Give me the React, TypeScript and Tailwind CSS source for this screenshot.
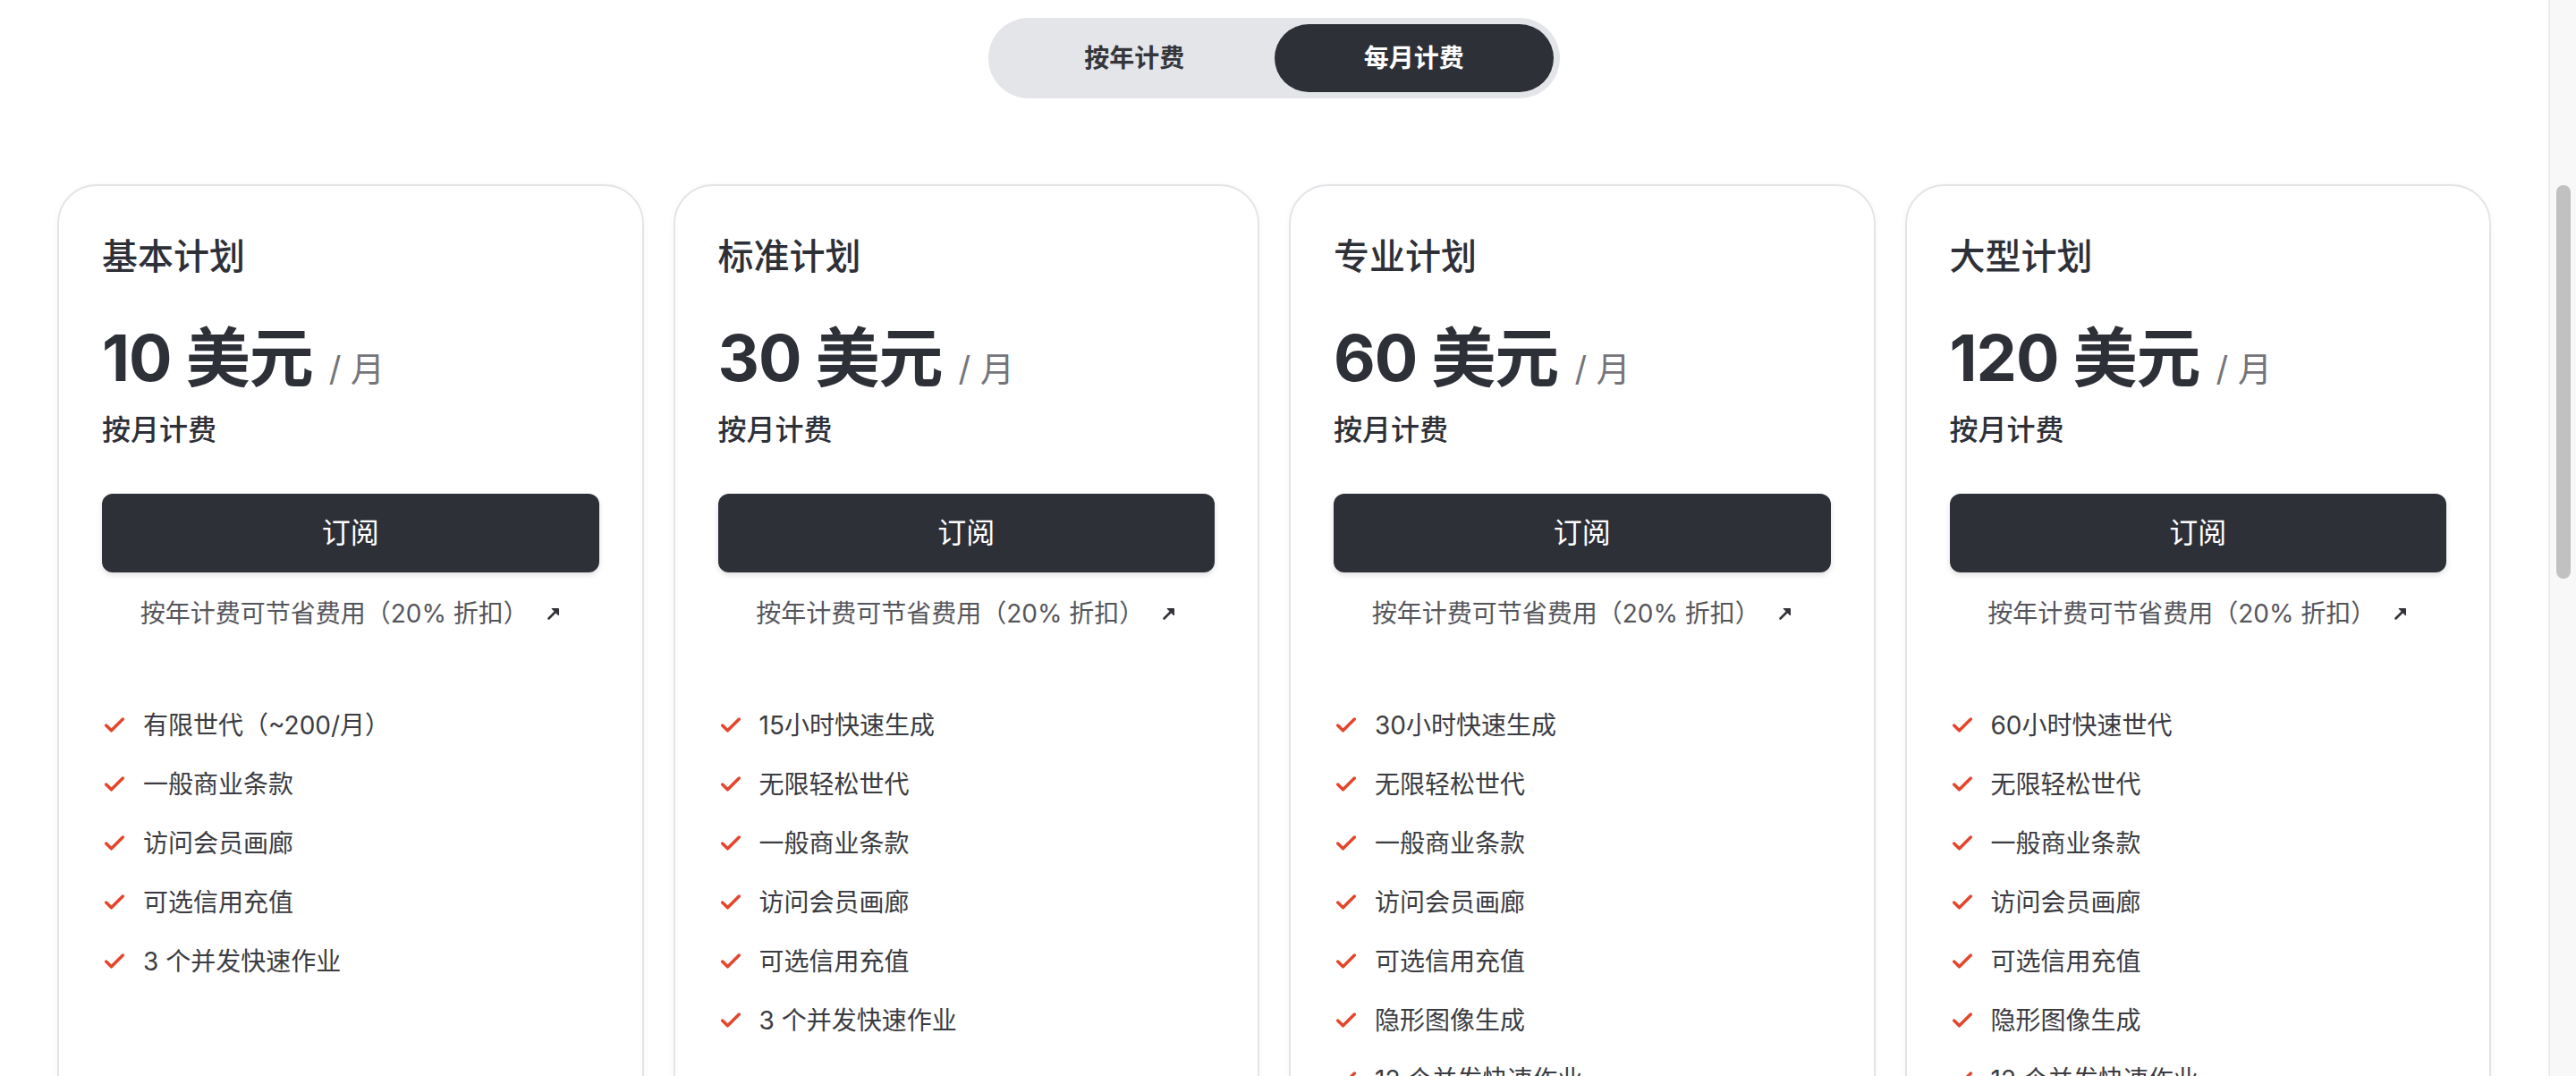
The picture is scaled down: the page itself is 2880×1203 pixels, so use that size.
import { Check } from "lucide-react"

interface Plan {
  name: string
  price: number
  features: string[]
}

const plans: Plan[] = [
  {
    name: "基本计划",
    price: 10,
    features: ["有限世代（~200/月）", "一般商业条款", "访问会员画廊", "可选信用充值", "3 个并发快速作业"],
  },
  {
    name: "标准计划",
    price: 30,
    features: ["15小时快速生成", "无限轻松世代", "一般商业条款", "访问会员画廊", "可选信用充值", "3 个并发快速作业"],
  },
  {
    name: "专业计划",
    price: 60,
    features: [
      "30小时快速生成",
      "无限轻松世代",
      "一般商业条款",
      "访问会员画廊",
      "可选信用充值",
      "隐形图像生成",
      "12 个并发快速作业",
    ],
  },
  {
    name: "大型计划",
    price: 120,
    features: [
      "60小时快速世代",
      "无限轻松世代",
      "一般商业条款",
      "访问会员画廊",
      "可选信用充值",
      "隐形图像生成",
      "12 个并发快速作业",
    ],
  },
]

function ArrowUpRight() {
  return (
    <svg width="16" height="16" viewBox="0 0 16 16" className="ml-[20px] shrink-0 text-[#333438]">
      <path d="M2.5 13.5 11 5" stroke="currentColor" strokeWidth="2.6" strokeLinecap="round" />
      <path d="M6 2.5h7.5V10z" fill="currentColor" stroke="currentColor" strokeWidth="1" strokeLinejoin="round" />
    </svg>
  )
}

function PlanCard({ plan }: { plan: Plan }) {
  return (
    <div className="flex flex-col rounded-[44px] border-2 border-[#e4e4e8] bg-white px-[48px] pt-[51px] shadow-[0_2px_10px_rgba(0,0,0,0.04)]">
      <h3 className="text-[40px] leading-[56px] font-medium text-[#2e3038]">{plan.name}</h3>
      <div className="mt-[45px] flex items-baseline leading-[80px]">
        <span className="text-[72px] font-bold tracking-[-1px] text-[#2e3038]">{plan.price} 美元</span>
        <span className="ml-[18px] text-[38px] text-[#74747a]">/ 月</span>
      </div>
      <div className="mt-[7px] text-[32px] leading-[44px] font-medium text-[#2e3038]">按月计费</div>
      <button className="mt-[49px] h-[88px] w-full rounded-[12px] bg-[#2e3038] text-[32px] text-white shadow-[0_3px_6px_rgba(0,0,0,0.12)]">
        订阅
      </button>
      <div className="mt-[26px] flex items-center justify-center text-[28px] leading-[40px] text-[#55565c]">
        <span>按年计费可节省费用（20% 折扣）</span>
        <ArrowUpRight />
      </div>
      <ul className="mt-[85px] flex flex-col gap-[26px] pb-[120px]">
        {plan.features.map((f) => (
          <li key={f} className="flex items-center gap-[18px] text-[28px] leading-[40px] text-[#3b3c42]">
            <Check size={28} strokeWidth={3} className="shrink-0 text-[#e4462c]" />
            <span>{f}</span>
          </li>
        ))}
      </ul>
    </div>
  )
}

export default function App() {
  return (
    <div className="flex h-[1203px] w-full overflow-hidden bg-white font-['Inter','Noto_Sans_CJK_SC',sans-serif]">
      <main className="flex-1">
        <div className="flex justify-center pt-[20px]">
          <div className="flex h-[90px] w-[639px] rounded-full bg-[#e4e5e9] p-[7px]">
            <button className="flex-1 rounded-full text-[28px] font-semibold text-[#35363b]">按年计费</button>
            <button className="flex-1 rounded-full bg-[#2e3038] text-[28px] font-semibold text-white">每月计费</button>
          </div>
        </div>
        <div className="mt-[96px] grid grid-cols-4 gap-[33px] px-[64px]">
          {plans.map((p) => (
            <PlanCard key={p.name} plan={p} />
          ))}
        </div>
      </main>
      <aside className="w-[31px] shrink-0 border-l-2 border-[#ececec] bg-[#f8f8f8]">
        <div className="ml-[7px] mt-[207px] h-[440px] w-[16px] rounded-full bg-[#c1c1c1]" />
      </aside>
    </div>
  )
}
